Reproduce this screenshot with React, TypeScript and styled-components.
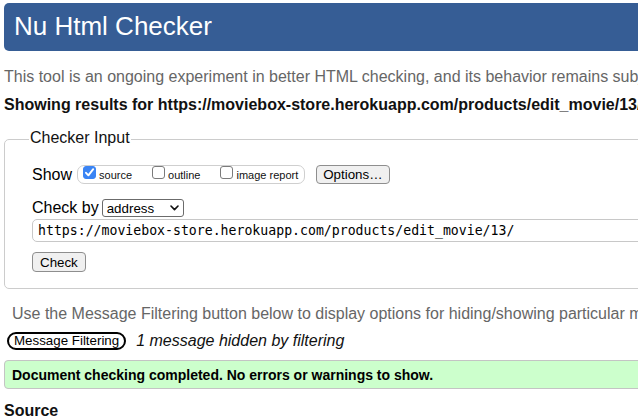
import React from "react";
import styled, { createGlobalStyle } from "styled-components";

const GlobalStyle = createGlobalStyle`
  html, body {
    margin: 0;
    padding: 0;
    overflow: hidden;
    background: #ffffff;
  }
  body {
    font-family: "Liberation Sans", Arial, sans-serif;
    color: #000000;
  }
`;

const Page = styled.div`
  width: 1100px;
  padding: 3px 0 0 4px;
  box-sizing: border-box;
`;

const Header = styled.header`
  background: #365d95;
  border-radius: 5px;
  padding: 8px 10px 10px;
`;

const Title = styled.h1`
  margin: 0;
  font-size: 26px;
  line-height: 30px;
  font-weight: normal;
  color: #ffffff;
`;

const Intro = styled.p`
  margin: 17px 0 0;
  font-size: 16px;
  line-height: 18px;
  color: #666666;
  white-space: nowrap;
`;

const ResultsFor = styled.p`
  margin: 10px 0 0;
  font-size: 16px;
  line-height: 18px;
  font-weight: bold;
  color: #111111;
  white-space: nowrap;
`;

const Fieldset = styled.fieldset`
  margin: 15px 0 0;
  padding: 15px 0 16px 27px;
  border: 1px solid #cccccc;
  border-radius: 5px;
  min-width: 0;
`;

const Legend = styled.legend`
  margin-left: -3px;
  padding: 0 1px 4px;
  font-size: 16px;
  line-height: 17px;
  color: #111111;
`;

const ShowRow = styled.div`
  display: flex;
  align-items: center;
  height: 19px;
`;

const RowLabel = styled.span`
  font-size: 16px;
  line-height: 18px;
  margin-right: ${(p: { $gap?: number }) => p.$gap ?? 5}px;
  white-space: nowrap;
`;

const ToggleGroup = styled.div`
  display: flex;
  align-items: flex-start;
  height: 19px;
  box-sizing: border-box;
  border: 1px solid #cfcfcf;
  border-radius: 7px;
  padding: 0 6px 0 5px;
`;

const ToggleLabel = styled.label`
  display: flex;
  align-items: flex-end;
  margin-right: ${(p: { $last?: boolean }) => (p.$last ? 0 : 20)}px;
`;

const Box = styled.span<{ $checked?: boolean }>`
  display: flex;
  align-items: center;
  justify-content: center;
  width: 13px;
  height: 13px;
  box-sizing: border-box;
  border-radius: 3px;
  border: 1px solid ${(p) => (p.$checked ? "#3a84f4" : "#7b7b7b")};
  background: ${(p) => (p.$checked ? "#3a84f4" : "#ffffff")};
  margin: 0 3px 3px 0;
`;

const ToggleText = styled.span`
  font-size: 11px;
  line-height: 13px;
  color: #111111;
  white-space: nowrap;
`;

const NativeButton = styled.button`
  height: ${(p: { $h?: number }) => p.$h ?? 20}px;
  box-sizing: border-box;
  padding: 0 6px;
  font-family: "Liberation Sans", Arial, sans-serif;
  font-size: 13.33px;
  line-height: 15px;
  color: #000000;
  background: #f0f0f0;
  border: 1px solid #8e8e8e;
  border-radius: 4px;
  white-space: nowrap;
`;

const OptionsButton = styled(NativeButton)`
  margin-left: 11px;
`;

const CheckByRow = styled.div`
  display: flex;
  align-items: center;
  height: 18px;
  margin-top: 15px;
`;

const SelectBox = styled.div`
  display: flex;
  align-items: center;
  justify-content: space-between;
  width: 82px;
  height: 18px;
  box-sizing: border-box;
  padding: 0 4px 0 4px;
  border: 1px solid #6b6b6b;
  border-radius: 3px;
  font-size: 13.33px;
  line-height: 15px;
  background: #ffffff;
`;

const UrlInput = styled.div`
  display: flex;
  align-items: center;
  margin-top: 2px;
  width: 1000px;
  height: 23px;
  box-sizing: border-box;
  padding: 0 5px;
  border: 1px solid #c8c8c8;
  border-radius: 5px;
  font-family: "DejaVu Sans Mono", "Liberation Mono", monospace;
  font-size: 13.2px;
  color: #000000;
  white-space: nowrap;
`;

const SubmitRow = styled.div`
  display: flex;
  margin-top: 10px;
  padding-left: 0;
`;

const CheckButton = styled(NativeButton)`
  padding: 0 7px;
`;

const Hint = styled.p`
  margin: 16px 0 0 8px;
  font-size: 16px;
  line-height: 18px;
  color: #666666;
  white-space: nowrap;
`;

const FilterRow = styled.div`
  display: flex;
  align-items: center;
  height: 18px;
  margin-top: 9px;
`;

const FilterButton = styled.button`
  margin-left: 3px;
  height: 18px;
  box-sizing: border-box;
  padding: 0 5px;
  border: 2px solid #000000;
  border-radius: 9px;
  background: #ffffff;
  font-family: "Liberation Sans", Arial, sans-serif;
  font-size: 13.33px;
  line-height: 14px;
  color: #000000;
  white-space: nowrap;
`;

const HiddenNote = styled.span`
  margin-left: 10px;
  font-size: 16px;
  line-height: 18px;
  font-style: italic;
  color: #111111;
  white-space: nowrap;
`;

const Success = styled.div`
  display: flex;
  align-items: center;
  margin-top: 10px;
  height: 29px;
  box-sizing: border-box;
  padding: 0 7px;
  background: #ccffcc;
  border: 1px solid #c4c4c4;
  border-radius: 4px;
  font-size: 14px;
  line-height: 16px;
  font-weight: bold;
  color: #000000;
  white-space: nowrap;
`;

const SourceHeading = styled.h2`
  margin: 13px 0 0;
  font-size: 16px;
  line-height: 18px;
  font-weight: bold;
  color: #111111;
`;

const CheckMark = () => (
  <svg width="11" height="11" viewBox="0 0 11 11" aria-hidden="true">
    <path
      d="M2 5.8 L4.4 8.3 L9.2 2.2"
      fill="none"
      stroke="#ffffff"
      strokeWidth="1.9"
      strokeLinecap="round"
      strokeLinejoin="round"
    />
  </svg>
);

const Chevron = () => (
  <svg width="9" height="6" viewBox="0 0 9 6" aria-hidden="true">
    <path
      d="M1 1 L4.5 4.6 L8 1"
      fill="none"
      stroke="#111111"
      strokeWidth="1.6"
      strokeLinecap="round"
      strokeLinejoin="round"
    />
  </svg>
);

const toggles = [
  { label: "source", checked: true },
  { label: "outline", checked: false },
  { label: "image report", checked: false },
];

export default function App() {
  return (
    <>
      <GlobalStyle />
      <Page>
        <Header>
          <Title>Nu Html Checker</Title>
        </Header>
        <Intro>
          This tool is an ongoing experiment in better HTML checking, and its behavior remains subject to change
        </Intro>
        <ResultsFor>
          Showing results for https://moviebox-store.herokuapp.com/products/edit_movie/13/
        </ResultsFor>
        <Fieldset>
          <Legend>Checker Input</Legend>
          <ShowRow>
            <RowLabel $gap={5}>Show</RowLabel>
            <ToggleGroup>
              {toggles.map((t, i) => (
                <ToggleLabel key={t.label} $last={i === toggles.length - 1}>
                  <Box $checked={t.checked}>{t.checked && <CheckMark />}</Box>
                  <ToggleText>{t.label}</ToggleText>
                </ToggleLabel>
              ))}
            </ToggleGroup>
            <OptionsButton $h={19}>Options…</OptionsButton>
          </ShowRow>
          <CheckByRow>
            <RowLabel $gap={3}>Check by</RowLabel>
            <SelectBox>
              <span>address</span>
              <Chevron />
            </SelectBox>
          </CheckByRow>
          <UrlInput>https://moviebox-store.herokuapp.com/products/edit_movie/13/</UrlInput>
          <SubmitRow>
            <CheckButton $h={20}>Check</CheckButton>
          </SubmitRow>
        </Fieldset>
        <Hint>
          Use the Message Filtering button below to display options for hiding/showing particular messages, and to see total counts of errors and warnings.
        </Hint>
        <FilterRow>
          <FilterButton>Message Filtering</FilterButton>
          <HiddenNote>1 message hidden by filtering</HiddenNote>
        </FilterRow>
        <Success>Document checking completed. No errors or warnings to show.</Success>
        <SourceHeading>Source</SourceHeading>
      </Page>
    </>
  );
}
